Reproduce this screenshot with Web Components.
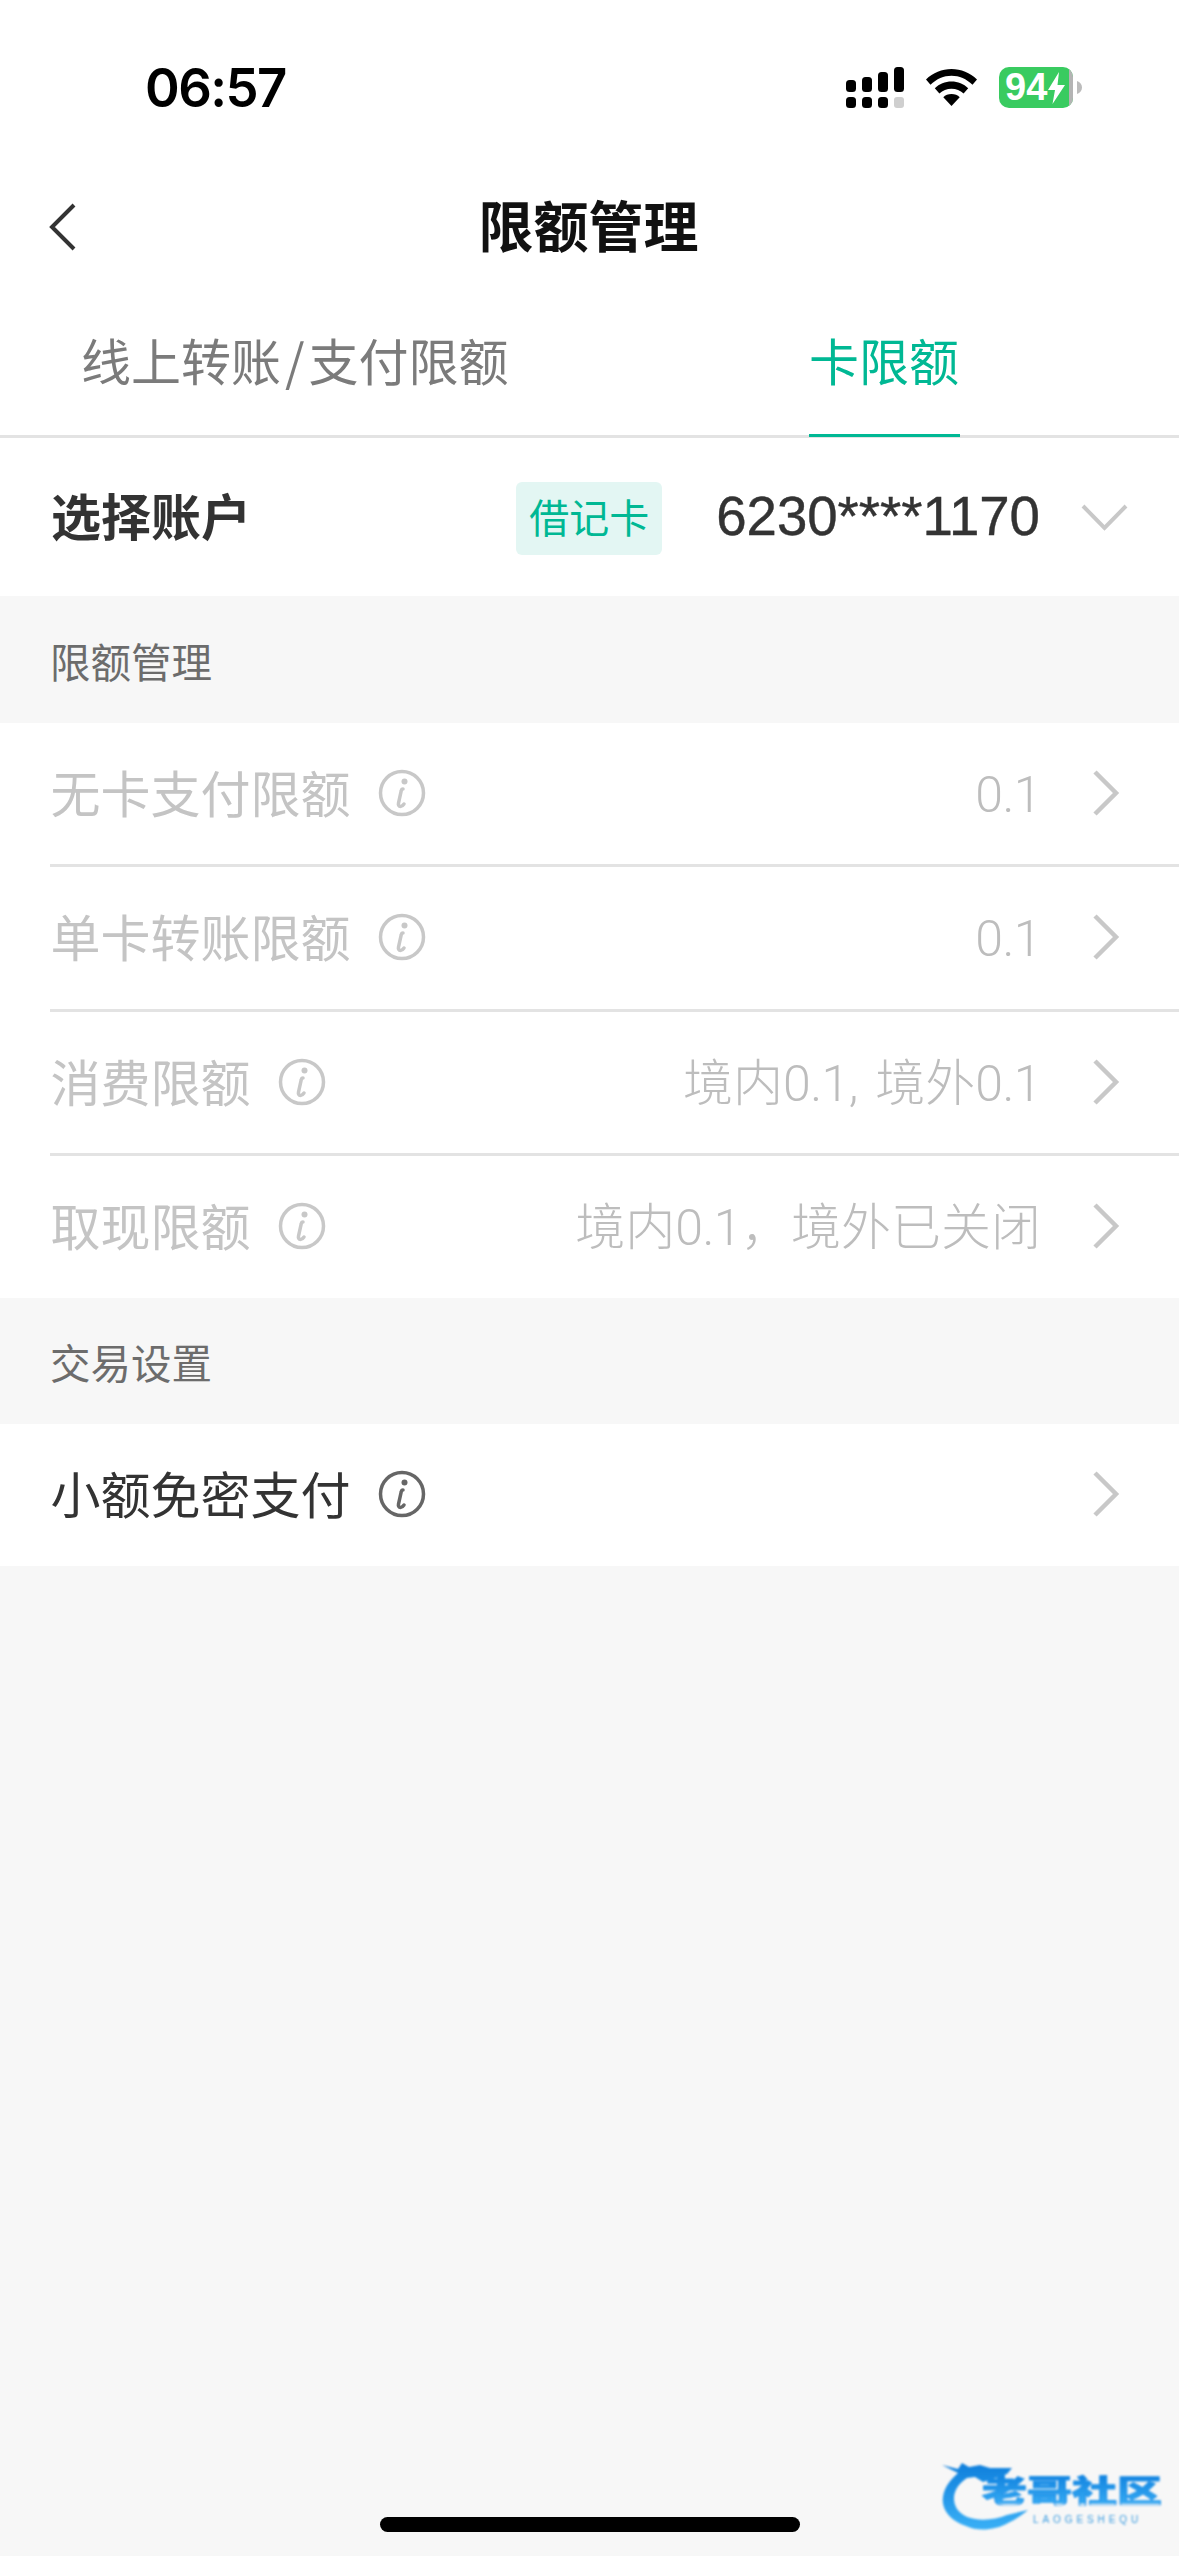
<!DOCTYPE html>
<html lang="zh"><head><meta charset="utf-8"><style>
html,body{margin:0;padding:0;background:#f7f7f7}
body{width:1179px;height:2556px;position:relative;overflow:hidden;font-family:"Noto Sans CJK SC","Liberation Sans",sans-serif}
</style></head><body>
<app-status></app-status>
<app-nav>限额管理</app-nav>
<app-tabs></app-tabs>
<app-account></app-account>
<sec-title>限额管理</sec-title>
<limit-group>
<limit-row label="无卡支付限额" value="0.1" disabled></limit-row>
<limit-row label="单卡转账限额" value="0.1" disabled></limit-row>
<limit-row label="消费限额" value="境内0.1, 境外0.1" disabled></limit-row>
<limit-row label="取现限额" value="境内0.1，境外已关闭" disabled></limit-row>
</limit-group>
<sec-title style="height:126px">交易设置</sec-title>
<limit-group>
<limit-row label="小额免密支付" value=""></limit-row>
</limit-group>
<app-watermark></app-watermark>
<home-bar></home-bar>
<script>
function def(name,html){customElements.define(name,class extends HTMLElement{constructor(){super();this.attachShadow({mode:'open'}).innerHTML=html}})}
const CJK='"Noto Sans CJK SC","Liberation Sans",sans-serif';
def('app-status',`<style>
:host{display:flex;height:174px;background:#fff;box-sizing:border-box;padding:59px 97px 0 145px;justify-content:space-between;align-items:flex-start}
.t{font:600 54px/56px Inter,"Liberation Sans",sans-serif;color:#000;letter-spacing:-1.6px;transform:scaleX(.975);transform-origin:left;margin-top:1px}
.r{display:flex;align-items:flex-start;padding-top:8px}
.bat{width:74px;height:41px;background:#39cb60;border-radius:10px;margin-left:22px;display:flex;align-items:center;padding-left:6px;box-sizing:border-box;color:#fff;font:700 38px/41px "Liberation Sans",sans-serif;overflow:hidden;position:relative}
.bat i{position:absolute;right:0;top:0;bottom:0;width:4px;background:#b4b4b4}
.nub{margin:14px 0 0 4px}
svg{display:block}
</style><div class="t">06:57</div><div class="r">
<svg width="58" height="41" viewBox="0 0 58 41"><g fill="#000"><rect x="0" y="13" width="10" height="12" rx="3.5"/><rect x="16" y="10" width="10" height="15" rx="3.5"/><rect x="32" y="5" width="10" height="20" rx="3.5"/><rect x="48" y="0" width="10" height="25" rx="3.5"/><rect x="0" y="30" width="10" height="11" rx="3.5"/><rect x="16" y="30" width="10" height="11" rx="3.5"/><rect x="32" y="30" width="10" height="11" rx="3.5"/></g><rect x="48" y="30" width="10" height="11" rx="3" fill="#cfcfcf"/></svg>
<svg style="margin-left:22px;margin-top:2px" width="51" height="37" viewBox="0 0 51 37"><path d="M25.5 0C16 0 7 3.600 0 10.500l4.500 5.300C10.500 10 17.800 6.800 25.500 6.800S40.500 10 46.500 15.800l4.500-5.300C44 3.600 35 0 25.500 0Z"/><path d="M25.500 12.500c-6.400 0-12.200 2.400-16.700 6.700l4.600 5.300c3.300-3.100 7.500-4.800 12.100-4.800s8.800 1.700 12.100 4.800l4.600-5.300c-4.500-4.300-10.300-6.700-16.700-6.700Z"/><path d="M25.500 25c-3.300 0-6.200 1.200-8.200 3.200L25.500 37l8.200-8.800c-2-2-4.900-3.200-8.200-3.200Z"/></svg>
<div class="bat">94<svg style="margin-left:1px" width="17" height="32" viewBox="0 0 17 32"><path fill="#fff" d="M11 0 0 18h7L4.500 32 17 13h-7.500Z"/></svg><i></i></div>
<svg class="nub" width="5" height="13" viewBox="0 0 5 13"><path fill="#bcbcbc" d="M0 0c3 1 5 3.500 5 6.500S3 12 0 13Z"/></svg>
</div>`);
def('app-nav',`<style>
:host{display:flex;height:106px;background:#fff;align-items:center;justify-content:center;position:relative;font:700 55px/1 ${CJK};color:#111}
svg{position:absolute;left:47px;top:29px}
span{margin-top:-7px;margin-left:-2px}
</style><svg width="32" height="48" viewBox="0 0 32 48"><path d="M27 2 5 24l22 22" fill="none" stroke="#333" stroke-width="4"/></svg><span><slot></slot></span>`);
def('app-tabs',`<style>
:host{display:flex;height:158px;background:#fff;box-sizing:border-box;border-bottom:3px solid #e3e3e3;font:400 50px/1 ${CJK};color:#7b7b7b;position:relative}
div{position:absolute;top:54px}
.a{left:81px}
.a span{margin:0 4px}
.b{left:809px;color:#00b894}
i{position:absolute;left:809px;width:151px;height:3px;top:154px;background:#00b894}
</style><div class="a">线上转账<span>/</span>支付限额</div><div class="b">卡限额</div><i></i>`);
def('app-account',`<style>
:host{display:flex;height:158px;background:#fff;align-items:center;box-sizing:border-box;padding:0 52px 0 51px}
.l{font:700 50px/1 ${CJK};color:#333;flex:1;margin-top:-7px}
.tag{width:146px;height:73px;margin-top:2px;background:#e3f6f3;border-radius:6px;color:#00b894;font:400 40px/68px ${CJK};text-align:center}
.n{margin-left:54px;font:400 54.600px/1 "Liberation Sans",sans-serif;color:#333;-webkit-text-stroke:.4px #333}
svg{margin-left:41px;margin-right:-1px}
</style><div class="l">选择账户</div><div class="tag">借记卡</div><div class="n">6230****1170</div><svg width="47" height="28" viewBox="0 0 47 28"><path d="M2 3l21.500 22L45 3" fill="none" stroke="#c8c8c8" stroke-width="4"/></svg>`);
def('sec-title',`<style>
:host{display:flex;height:127px;align-items:center;box-sizing:border-box;padding:0 50px;font:400 40.500px/1 ${CJK};color:#6c6c6c}
span{margin-top:3px}
</style><span><slot></slot></span>`);
def('limit-group',`<style>:host{display:block;background:#fff}</style><slot></slot>`);
def('limit-row',`<style>
:host{display:flex;height:144.330px;box-sizing:border-box;margin-left:50px;padding-right:59px;align-items:center;font-family:${CJK};color:#333;border-bottom:3px solid #e3e3e3}
:host(:last-child){height:142px;border-bottom:0}
:host([disabled]){color:#c4c4c4}
.l{font-size:50px;line-height:1;margin-top:-5px;margin-left:.5px}
svg.i{margin-left:27.500px;margin-top:-1px;color:#666}
:host([disabled]) svg.i{color:#c8c8c8}
.v{flex:1;text-align:right;font:300 50px/1 "Noto Sans CJK SC",sans-serif;margin-top:-2px;color:#bdbdbd}
.v b{font:300 50px/1 Roboto,"Liberation Sans",sans-serif;letter-spacing:-.6px}
.v b.sep{letter-spacing:6px}
svg.c{margin-left:50px;margin-top:-1px}
</style><div class="l"></div><svg class="i" width="48" height="48" viewBox="0 0 48 48" fill="none" stroke="currentColor"><circle cx="24" cy="24" r="21.500" stroke-width="3.500"/><circle cx="26.500" cy="12.500" r="3" fill="currentColor" stroke="none"/><path stroke-width="3.500" stroke-linecap="round" d="M25 20c-1 0-1.500 .5-1.800 2l-2.700 12c-.4 2 .3 3.500 2 3.500 1.500 0 2.500-1 3.500-2.500"/></svg><div class="v"></div><svg class="c" width="29" height="46" viewBox="0 0 29 46"><path d="M4 2l21 21L4 44" fill="none" stroke="#c8c8c8" stroke-width="4.500"/></svg>`);
document.querySelectorAll('limit-row').forEach(r=>{r.shadowRoot.querySelector('.l').textContent=r.getAttribute('label');
r.shadowRoot.querySelector('.v').innerHTML=r.getAttribute('value').replace(/[0-9.]+/g,'<b>$&</b>').replace(/, /g,'<b class="sep">,</b> ')});
def('app-watermark',`<style>
:host{display:block;position:absolute;left:938px;top:2455px;width:230px;height:85px;filter:blur(.8px)}
svg{position:absolute;left:0;top:0}
.t{position:absolute;left:44px;top:18px;font:900 45px/1 ${CJK};color:transparent;background:linear-gradient(#0f80de,#35aaf3);-webkit-background-clip:text;background-clip:text;white-space:nowrap;transform:scaleY(.68);transform-origin:top left;-webkit-text-stroke:1px #1d8fe8}
.s{position:absolute;left:95px;top:60px;font:400 10px/1 "Liberation Sans",sans-serif;letter-spacing:3.900px;color:#3b9ce0;white-space:nowrap}
</style><svg width="230" height="85" viewBox="0 0 230 85"><defs><linearGradient id="g" x1="0" y1="0" x2="0" y2="1"><stop offset="0" stop-color="#0f7fdc"/><stop offset="1" stop-color="#3ab0f6"/></linearGradient></defs><path fill="url(#g)" d="M4 10 20 14 24 8 31 12 42 10 52 13 74 13 69 19 55 24 45 27 37 22 29 23C18 30 12 42 19 54 28 67 52 67 69 60L90 55C82 62 74 66 70 68 58 75 40 77 28 71 12 66 3 54 5 42 6 33 12 25 20 18Z"/></svg><div class="t">老哥社区</div><div class="s">LAOGESHEQU</div>`);
def('home-bar',`<style>:host{display:block;position:absolute;left:380px;top:2517px;width:420px;height:15px;border-radius:8px;background:#000}</style>`);
</script>
</body></html>
